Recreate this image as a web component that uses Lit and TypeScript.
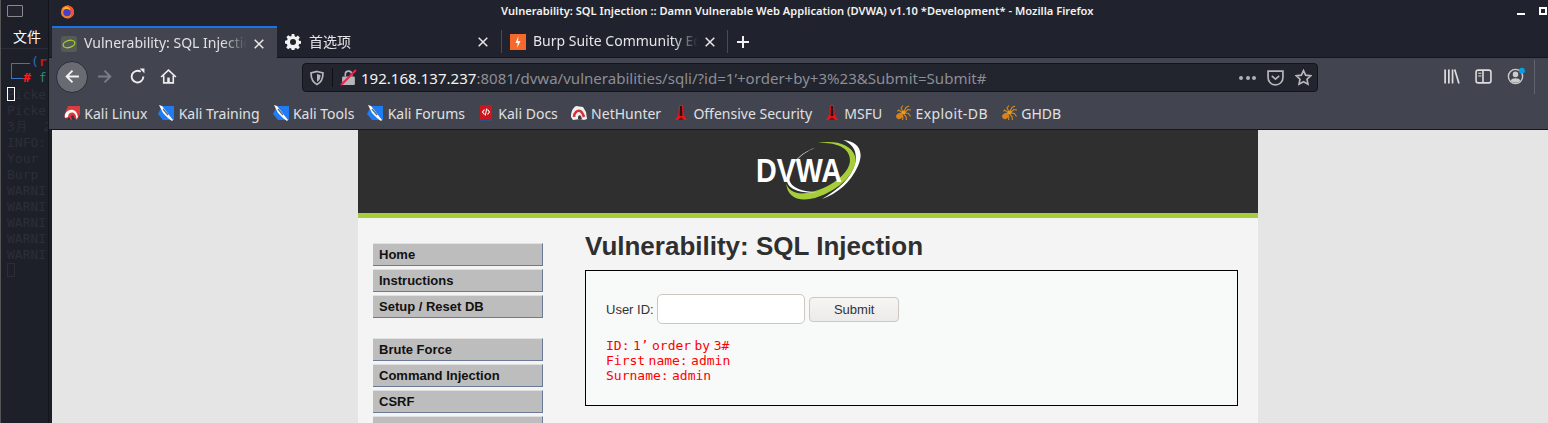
import { LitElement, css, html, svg } from 'lit';
import { customElement } from 'lit/decorators.js';

// Bookmark-Icons
const kaliRed = svg`<svg class="bm-ico" viewBox="0 0 16 16"><path d="M4 1h12v8l-3 6H4L0 11z" fill="#dc3a3f"/><path d="M1 13C0 8 4 4 9 5c3 .6 4 3 5 7l-1.500 2C12 10 11 8 9 7.500 6 7 4 9 4 12z" fill="#fff"/><path d="M2 15l3-3 2 3zM7 11c1-1 3-1 3 1l2 3H8z" fill="#3a3a3f"/></svg>`;
const kaliWhite = svg`<svg class="bm-ico" viewBox="0 0 16 16"><path d="M5 1l7 1 3 5 1 7-3 1-4-1-7 1-2-3c0-6 2-9 5-11z" fill="#f1f1f1"/><path d="M3 12C3 8 6 5 9 6c2 .7 3 3 4 6" fill="none" stroke="#d3333a" stroke-width="2.600"/><path d="M7 12c.5-2 2-2.500 3-1l1 3H7z" fill="#3a3a3f"/></svg>`;
const kaliBlue = svg`<svg class="bm-ico" viewBox="0 0 16 16"><path d="M4 1h12v14H5L0 9z" fill="#1f7cf2"/><path d="M1 0l3 1 4 5 3 4 4 5-1 1-4-3-5-5-2-4z" fill="#fff"/><path d="M5 4l5 6" stroke="#5a6270" stroke-width="1.200"/></svg>`;
const docs = svg`<svg class="bm-ico" viewBox="0 0 16 16"><rect x="2" y="0" width="12" height="14" fill="#c9171d"/><rect x="2" y="14" width="12" height="2" fill="#2c4f8a"/><path d="M6.500 4.500L4.500 7l2 2.500M9.500 4.500l2 2.500-2 2.500M8.700 3.500L7.300 10.500" fill="none" stroke="#fff" stroke-width="1.100"/></svg>`;
const rocket = svg`<svg class="bm-ico" viewBox="0 0 16 16"><path d="M6 0h4l.6 9 3.400 6H2l3.400-6z" fill="#e0171d"/><path d="M7 1h2l.4 10H6.600z" fill="#2c1214"/><path d="M5 15l3-3 3 3z" fill="#7a0e12"/></svg>`;
const spider = svg`<svg class="bm-ico" viewBox="0 0 16 16"><ellipse cx="4.500" cy="11" rx="3.500" ry="2.800" fill="#d9821a" transform="rotate(-30 4.500 11)"/><ellipse cx="8.500" cy="7.500" rx="2.300" ry="2" fill="#e89a22"/><path d="M9 6.500L11 2.500 14 1M10 7l3-2.500 3 .5M10.500 8l3 .5 2 3M9 9.500l2 2 .5 3.500M7.500 6L6 3 8 .500M6.500 7L3.500 5 2.500 6.500M7 10l1 2-.5 3" fill="none" stroke="#d98a1b" stroke-width="1.100"/></svg>`;

const BOOKMARKS = [
  { label: 'Kali Linux', icon: kaliRed, cls: 'tight2' },
  { label: 'Kali Training', icon: kaliBlue, cls: '' },
  { label: 'Kali Tools', icon: kaliBlue, cls: '' },
  { label: 'Kali Forums', icon: kaliBlue, cls: '' },
  { label: 'Kali Docs', icon: docs, cls: '' },
  { label: 'NetHunter', icon: kaliWhite, cls: 'tight1' },
  { label: 'Offensive Security', icon: rocket, cls: 'tight1' },
  { label: 'MSFU', icon: rocket, cls: '' },
  { label: 'Exploit-DB', icon: spider, cls: 'wide' },
  { label: 'GHDB', icon: spider, cls: '' },
];

const TERM_LINES = ['Picke', 'Picke', '3月  2', 'INFO:', 'Your', 'Burp', 'WARNI', 'WARNI', 'WARNI', 'WARNI', 'WARNI'];

const close = html`<svg class="x" viewBox="0 0 10 10"><path d="M.7.700l8.600 8.600M9.300.7L.7 9.300" stroke="currentColor" stroke-width="1.500" fill="none"/></svg>`;

@customElement('app-root')
export class AppRoot extends LitElement {
  static styles = css`
    :host {
      display: block;
      width: 1548px;
      height: 423px;
      overflow: hidden;
      font-family: 'Noto Sans', sans-serif;
    }
    .desktop {
      display: flex;
      height: 423px;
      background: #1d1f28;
    }

    /* Terminal links hinter dem Browser */
    .term {
      width: 47px;
      flex: none;
      border-left: 1px solid #555;
      background: #1e2029;
      overflow: hidden;
    }
    .term-top {
      height: 49px;
      border-bottom: 1px solid #2a2c36;
      box-sizing: border-box;
      padding: 5px 0 0 6px;
      color: #fff;
    }
    .term-ico {
      display: block;
      width: 16px;
      height: 12px;
      border: 1px solid #8a8a8a;
      border-radius: 1px;
      box-sizing: border-box;
      background: #23252e;
    }
    .menu-file {
      margin: 10px 0 0 6px;
      font: 14px/18px 'Noto Sans CJK SC', sans-serif;
    }
    .term-body {
      padding: 4px 0 0 6px;
      font: 13px/16px 'DejaVu Sans Mono', monospace;
      color: #2b2e38;
    }
    .term-line {
      height: 16px;
      white-space: pre;
    }
    .prompt {
      height: 34px;
      margin-left: 4px;
      position: relative;
    }
    .bracket {
      position: absolute;
      left: 0;
      top: 10px;
      width: 19px;
      height: 16px;
      border: solid #3b74c4;
      border-width: 1px 0 1px 1px;
      box-sizing: border-box;
    }
    .p1 {
      position: absolute;
      left: 20px;
      top: 1px;
      color: #2f6bbd;
      white-space: pre;
    }
    .p1 b {
      color: #d01313;
    }
    .p2 {
      position: absolute;
      left: 12px;
      top: 17px;
      color: #ff1a1a;
      font-weight: bold;
      white-space: pre;
    }
    .p2 i {
      color: #2e8b6f;
      font-style: normal;
      font-weight: normal;
      margin-left: 8px;
    }
    .cursor {
      width: 8px;
      height: 14px;
      border: 1px solid #fff;
      box-sizing: border-box;
      margin-bottom: -14px;
      position: relative;
    }
    .cursor-dim {
      width: 8px;
      height: 14px;
      border: 1px solid #2b2e38;
      box-sizing: border-box;
    }

    /* Firefox */
    .ff {
      flex: 1;
      min-width: 0;
      display: flex;
      flex-direction: column;
      border-left: 1px solid #14151b;
    }
    .title {
      height: 26px;
      flex: none;
      background: #20232d;
      display: flex;
      align-items: center;
      position: relative;
      padding-left: 11px;
    }
    .ff-logo {
      width: 15px;
      height: 15px;
      margin-top: -4px;
    }
    .title-text {
      position: absolute;
      left: 452px;
      top: 3px;
      font: 600 11.120px/16px 'Noto Sans', sans-serif;
      color: #f2f2f2;
      white-space: nowrap;
    }
    .win-min {
      position: absolute;
      left: 1468px;
      top: 13px;
      width: 8px;
      height: 2px;
      background: #fff;
    }
    .win-max {
      position: absolute;
      left: 1490px;
      top: 7px;
      width: 8px;
      height: 8px;
      border: 2px solid #fff;
      box-sizing: border-box;
    }
    .tabs {
      height: 32px;
      flex: none;
      background: #20232d;
      display: flex;
      align-items: stretch;
      font-size: 14px;
      color: #e4e5e8;
      border-bottom: 1px solid #14151b;
      box-sizing: border-box;
    }
    .tab {
      display: flex;
      align-items: center;
      box-sizing: border-box;
      white-space: nowrap;
    }
    .tab .name {
      flex: 1;
      overflow: hidden;
      line-height: 20px;
      margin-top: -2px;
      -webkit-mask-image: linear-gradient(to right, #000 85%, transparent);
      mask-image: linear-gradient(to right, #000 85%, transparent);
    }
    .tab .name.cjk {
      font-family: 'Noto Sans CJK SC', sans-serif;
    }
    .tab .x {
      width: 10px;
      height: 10px;
      flex: none;
      color: #e8e8e8;
    }
    .tab-active {
      width: 225px;
      margin-left: 3px;
      margin-bottom: -1px;
      padding: 1px 13px 0 9px;
      background: #42454f;
      border-top: 2px solid #1a73e8;
      gap: 7px;
      color: #dfe0e3;
    }
    .tab-pref {
      width: 224px;
      padding: 0 13px 0 8px;
      gap: 8px;
    }
    .tab-burp {
      width: 226px;
      padding: 0 12px 0 8px;
      gap: 7px;
      border-left: 1px solid #4a4c55;
      margin: 4px 0;
    }
    .favicon {
      width: 16px;
      height: 16px;
      flex: none;
    }
    .newtab {
      border-left: 1px solid #4a4c55;
      margin: 4px 0;
      width: 30px;
      display: flex;
      align-items: center;
      justify-content: center;
    }
    .newtab svg {
      width: 14px;
      height: 14px;
    }
    .nav {
      height: 37px;
      flex: none;
      background: #42454f;
      display: flex;
      align-items: center;
      position: relative;
    }
    .back {
      width: 32px;
      height: 32px;
      border-radius: 50%;
      background: #696b73;
      border: 1px solid #2c2e36;
      box-sizing: border-box;
      margin-left: 7px;
      display: flex;
      align-items: center;
      justify-content: center;
    }
    .nav-ico {
      width: 17px;
      height: 17px;
      flex: none;
    }
    .forward {
      margin-left: 8px;
    }
    .reload {
      margin-left: 16px;
    }
    .home {
      margin-left: 14px;
    }
    .shield {
      margin-left: 6px;
      width: 16px;
      height: 16px;
    }
    .pocket {
      margin-right: 11px;
    }
    .star {
      margin-right: 5px;
    }
    .account {
      overflow: visible;
    }
    .nav-right {
      margin-left: auto;
      display: flex;
      align-items: center;
      gap: 15px;
      padding-right: 13px;
    }
    .divider {
      width: 1px;
      height: 34px;
      background: #62646b;
      margin-left: -5px;
    }
    .urlbar {
      position: absolute;
      left: 253px;
      top: 5px;
      width: 1016px;
      height: 29px;
      box-sizing: border-box;
      background: #22242e;
      border: 1px solid #14151b;
      border-radius: 4px;
      display: flex;
      align-items: center;
      font-size: 15.050px;
      white-space: nowrap;
    }
    .url {
      color: #8c8e95;
      margin-left: 4px;
      flex: 1;
    }
    .url b {
      color: #f2f2f2;
      font-weight: 400;
    }
    .sep {
      width: 1px;
      height: 19px;
      background: #0f1015;
      margin: 0 7px;
    }
    .dots {
      display: flex;
      gap: 2.500px;
      margin-right: 11px;
    }
    .dots i {
      width: 4px;
      height: 4px;
      border-radius: 50%;
      background: #b0b1b6;
    }
    .bookmarks {
      height: 35px;
      flex: none;
      box-sizing: border-box;
      background: #42454f;
      border-bottom: 1px solid #17181d;
      display: flex;
      align-items: center;
      padding: 2px 0 0 15px;
      gap: 13px;
      font-size: 14px;
      color: #e0e0e2;
    }
    .bm {
      display: flex;
      align-items: center;
      gap: 4.300px;
      white-space: nowrap;
    }
    .bm.tight2 {
      margin-right: -2px;
    }
    .bm.tight1 {
      margin-right: -1px;
    }
    .bm.wide span {
      letter-spacing: 0.400px;
    }
    .bm-ico {
      width: 16px;
      height: 16px;
      flex: none;
    }

    /* Seite */
    .page {
      flex: 1;
      min-height: 0;
      display: flex;
      background: #e5e5e5;
      border-left: 3px solid #1d1f28;
      overflow: hidden;
    }
    .container {
      width: 900px;
      margin-left: 306px;
      background: #f4f4f4;
      color: #2f2f2f;
      font-family: 'Liberation Sans', Arial, sans-serif;
      font-size: 13px;
    }
    .header {
      height: 88px;
      box-sizing: border-box;
      background: #2f2f2f;
      border-bottom: 5px solid #a6ce39;
      display: flex;
      justify-content: center;
      padding-top: 8px;
    }
    .logo {
      width: 110px;
      height: 64px;
    }
    .main {
      display: flex;
    }
    .menu {
      width: 170px;
      margin: 25px 0 0 15px;
      flex: none;
    }
    .menu-block {
      display: flex;
      flex-direction: column;
      gap: 3px;
      margin-bottom: 20px;
    }
    .menu-item {
      height: 23px;
      box-sizing: border-box;
      background: #bdbdbd;
      border-top: 1px solid #e0e0e0;
      border-right: 1px solid #6b7a96;
      border-bottom: 1px solid #6b7a96;
      padding-left: 6px;
      font-weight: bold;
      font-size: 13px;
      line-height: 21px;
      color: #111;
    }
    .body {
      width: 653px;
      margin-left: 42px;
    }
    h1 {
      margin: 14px 0 0;
      font-size: 26px;
      line-height: 29px;
      font-weight: bold;
      color: #2f2f2f;
    }
    .vuln {
      height: 136px;
      margin-top: 9px;
      box-sizing: border-box;
      border: 1px solid #000;
      background: #f8f9f9;
      padding: 23px 0 0 20px;
    }
    .form {
      display: flex;
      align-items: center;
      color: #333;
      height: 30px;
    }
    .input {
      width: 148px;
      height: 30px;
      margin-left: 3px;
      box-sizing: border-box;
      background: #fff;
      border: 1px solid #cdc7c2;
      border-radius: 5px;
    }
    .submit {
      width: 90px;
      height: 25px;
      margin: 0 0 0 4px;
      padding: 0 0 0 1px;
      box-sizing: border-box;
      border: 1px solid #cdc7c2;
      border-radius: 4px;
      background: linear-gradient(#f6f5f4, #edebe9);
      color: #2e3436;
      font: 13px 'Liberation Sans', Arial, sans-serif;
    }
    pre {
      margin: 14px 0 0;
      color: #f00;
      font: 13px/15px 'DejaVu Sans Mono', monospace;
      word-spacing: -4.400px;
    }
  `;

  render() {
    return html`
      <div class="desktop">
        <div class="term">
          <div class="term-top">
            <span class="term-ico"></span>
            <div class="menu-file">文件</div>
          </div>
          <div class="term-body">
            <div class="prompt">
              <div class="bracket"></div>
              <span class="p1">(<b>r</b></span>
              <span class="p2">#<i>f</i></span>
            </div>
            <div class="cursor"></div>
            ${TERM_LINES.map(l => html`<div class="term-line">${l}</div>`)}
            <div class="cursor-dim"></div>
          </div>
        </div>

        <div class="ff">
          <div class="title">
            <svg class="ff-logo" viewBox="0 0 16 16">
              <circle cx="8" cy="8.500" r="7" fill="#f5812b"/>
              <path d="M8 1c3 1 6 3 7 7 0 4-3 7-7 7.500 3-1 4-3 4-5C12 8 10 6 8 5z" fill="#f0542e"/>
              <circle cx="7.500" cy="9" r="4" fill="#4a3fc4"/>
              <path d="M3 6c1-2 3-3 5-3 2 1 3 2 3 4-2-2-5-2-8-1z" fill="#ffb428"/>
            </svg>
            <div class="title-text">Vulnerability: SQL Injection :: Damn Vulnerable Web Application (DVWA) v1.10 *Development* - Mozilla Firefox</div>
            <div class="win-min"></div>
            <div class="win-max"></div>
          </div>

          <div class="tabs">
            <div class="tab tab-active">
              <svg class="favicon" viewBox="0 0 16 16">
                <rect width="16" height="16" rx="2" fill="#555a55"/>
                <ellipse cx="8" cy="8" rx="6" ry="3.500" transform="rotate(-15 8 8)" fill="none" stroke="#a6ce39" stroke-width="1.300"/>
              </svg>
              <span class="name">Vulnerability: SQL Injection</span>
              ${close}
            </div>
            <div class="tab tab-pref">
              <svg class="favicon" viewBox="0 0 16 16">
                <path d="M6.700 0h2.600l.4 2.300 1.300.6 1.900-1.300 1.900 1.900-1.300 1.900.6 1.300 2.300.4v2.600l-2.300.4-.6 1.300 1.300 1.900-1.900 1.900-1.900-1.300-1.300.6-.4 2.300H6.700l-.4-2.300-1.300-.6-1.900 1.300-1.900-1.900 1.300-1.900-.6-1.300L-.2 9.300V6.700l2.300-.4.6-1.300-1.300-1.900 1.900-1.900 1.900 1.300 1.300-.6z" fill="#f2f2f2"/>
                <circle cx="8" cy="8" r="3" fill="#20232d"/>
              </svg>
              <span class="name cjk">首选项</span>
              ${close}
            </div>
            <div class="tab tab-burp">
              <svg class="favicon" viewBox="0 0 16 16">
                <rect width="16" height="16" fill="#f56a2c"/>
                <path d="M8.500 2L5.500 9h2.300L7 14l3.500-7H8z" fill="#fff"/>
              </svg>
              <span class="name">Burp Suite Community Edition</span>
              ${close}
            </div>
            <div class="newtab">
              <svg viewBox="0 0 14 14"><path d="M7 1v12M1 7h12" stroke="#f0f0f0" stroke-width="2" fill="none"/></svg>
            </div>
          </div>

          <div class="nav">
            <div class="back">
              <svg class="nav-ico" viewBox="0 0 16 16"><path d="M14 8H3M8 2.500L2.500 8 8 13.500" fill="none" stroke="#f2f2f2" stroke-width="1.800"/></svg>
            </div>
            <svg class="nav-ico forward" viewBox="0 0 16 16"><path d="M2 8h11M8 2.500L13.500 8 8 13.500" fill="none" stroke="#7b7d84" stroke-width="1.800"/></svg>
            <svg class="nav-ico reload" viewBox="0 0 16 16"><path d="M13.500 8A5.500 5.500 0 1 1 11 3.500" fill="none" stroke="#eee" stroke-width="1.800"/><path d="M10 .5h4.500V5z" fill="#eee"/></svg>
            <svg class="nav-ico home" viewBox="0 0 16 16"><path d="M1 8.500L8 2l7 6.500M3.500 7v7h9V7" fill="none" stroke="#eee" stroke-width="1.500"/><rect x="6.800" y="9" width="2.400" height="5" fill="#eee"/></svg>

            <div class="urlbar">
              <svg class="nav-ico shield" viewBox="0 0 16 16"><path d="M8 1.500l6 1.500c0 5-1 9-6 11.500C3 12 2 8 2 3z" fill="none" stroke="#b5b6ba" stroke-width="1.700"/><path d="M8 4l3.500 1c0 3-.5 5-3.500 7z" fill="#b5b6ba"/></svg>
              <div class="sep"></div>
              <svg class="nav-ico" viewBox="0 0 16 16"><rect x="2" y="7" width="12" height="8" rx="1" fill="#b5b6ba"/><path d="M5 7V5a3 3 0 0 1 6 0v2" fill="none" stroke="#b5b6ba" stroke-width="1.500"/><path d="M1 15L15 1" stroke="#e22850" stroke-width="2"/></svg>
              <div class="url"><b>192.168.137.237</b>:8081/dvwa/vulnerabilities/sqli/?id=1’+order+by+3%23&amp;Submit=Submit#</div>
              <div class="dots"><i></i><i></i><i></i></div>
              <svg class="nav-ico pocket" viewBox="0 0 16 16"><path d="M1 2h14v6a7 7 0 0 1-14 0z" fill="none" stroke="#b5b6ba" stroke-width="1.600"/><path d="M4.500 6.500L8 9.500l3.500-3" fill="none" stroke="#b5b6ba" stroke-width="1.600"/></svg>
              <svg class="nav-ico star" viewBox="0 0 16 16"><path d="M8 1.500l2 4.300 4.700.6-3.400 3.200.9 4.700L8 12l-4.200 2.300.9-4.700L1.300 6.400 6 5.800z" fill="none" stroke="#b5b6ba" stroke-width="1.600"/></svg>
            </div>

            <div class="nav-right">
              <svg class="nav-ico" viewBox="0 0 16 16"><path d="M2 1.500v13M5.500 1.500v13M9 1.500v13M11 1.500l4 13" fill="none" stroke="#ddd" stroke-width="1.600"/></svg>
              <svg class="nav-ico" viewBox="0 0 16 16"><rect x="1" y="2" width="14" height="12" rx="2" fill="none" stroke="#ddd" stroke-width="1.500"/><path d="M7.500 2v12" stroke="#ddd" stroke-width="1.500"/><path d="M3 5h3M3 7.500h3" stroke="#ddd"/></svg>
              <svg class="nav-ico account" viewBox="0 0 16 16"><circle cx="8" cy="8" r="6.700" fill="none" stroke="#ccc" stroke-width="1.300"/><circle cx="8" cy="6" r="2.600" fill="#ccc"/><path d="M3.500 12c1-3 8-3 9 0-2 2.500-7 2.500-9 0z" fill="#ccc"/><circle cx="14" cy="2.500" r="2.800" fill="#0a9de8"/></svg>
              <div class="divider"></div>
            </div>
          </div>

          <div class="bookmarks">
            ${BOOKMARKS.map(b => html`<div class="bm ${b.cls}">${b.icon}<span>${b.label}</span></div>`)}
          </div>

          <div class="page">
            <div class="container">
              <div class="header">
                <svg class="logo" viewBox="0 0 110 64">
                  <path d="M90 2C104 3 112 12 105 28 98 44 84 56 69 61 86 51 98 40 102 26 105 14 100 6 90 2z" fill="#fff"/>
                  <path d="M65 5C82 2 98 6 102 18 106 32 88 52 62 60 46 64 34 60 33 44 34 52 42 57 54 55 76 51 97 36 97 22 97 10 84 4 65 5z" fill="#a6ce39"/>
                  <path d="M62 10C46 16 35 30 36 40 37 50 50 54 64 54 50 56 34 52 34 42 34 28 48 14 62 10z" fill="#fff"/>
                  <text x="3" y="44" font-family="Liberation Sans" font-weight="bold" font-size="33" fill="#fff" textLength="86" lengthAdjust="spacingAndGlyphs">DVWA</text>
                </svg>
              </div>
              <div class="main">
                <div class="menu">
                  <div class="menu-block">
                    <div class="menu-item">Home</div>
                    <div class="menu-item">Instructions</div>
                    <div class="menu-item">Setup / Reset DB</div>
                  </div>
                  <div class="menu-block">
                    <div class="menu-item">Brute Force</div>
                    <div class="menu-item">Command Injection</div>
                    <div class="menu-item">CSRF</div>
                    <div class="menu-item"></div>
                  </div>
                </div>
                <div class="body">
                  <h1>Vulnerability: SQL Injection</h1>
                  <div class="vuln">
                    <div class="form">
                      <span>User ID:</span>
                      <div class="input"></div>
                      <button class="submit">Submit</button>
                    </div>
                    <pre>ID: 1’ order by 3#
First name: admin
Surname: admin</pre>
                  </div>
                </div>
              </div>
            </div>
          </div>
        </div>
      </div>
    `;
  }
}
